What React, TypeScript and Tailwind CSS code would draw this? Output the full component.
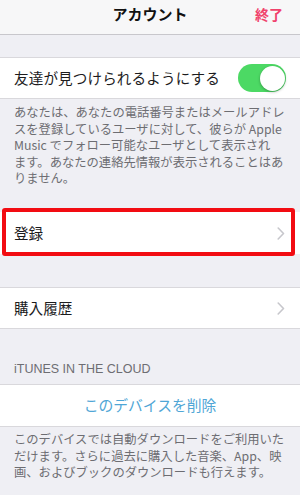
import React from "react";

const font = { fontFamily: '"Noto Sans CJK JP", "Noto Sans", sans-serif' };

function Chevron() {
  return (
    <svg width="8" height="13" viewBox="0 0 8 13" className="shrink-0">
      <path d="M1.2 1 L6.5 6.5 L1.2 12" fill="none" stroke="#c7c7cc" strokeWidth="1.6" strokeLinecap="round" strokeLinejoin="round" />
    </svg>
  );
}

export default function App() {
  return (
    <div className="w-[300px] h-[495px] overflow-hidden bg-[#efeff4] text-[#1c1c1e]" style={font}>
      {/* Nav bar */}
      <div className="h-[35px] bg-[#f7f7f8] border-b border-[#c8c7cc] flex items-start pt-[3px] relative">
        <div className="flex-1 text-center text-[15px] leading-[22px] font-bold text-[#111]">アカウント</div>
        <div className="absolute right-[17px] top-[3px] text-[14px] leading-[22px] font-bold text-[#f0426c]">終了</div>
      </div>

      <div className="h-[22px]" />

      {/* Toggle row */}
      <div className="h-[42px] bg-white border-y border-[#d9d8dc] flex items-center justify-between pl-[14px] pr-[14px]">
        <span className="text-[14.6px] tracking-[0.1px]">友達が見つけられるようにする</span>
        <div className="w-[48px] h-[28px] rounded-full bg-[#4cd964] flex items-center justify-end pr-[1.5px]">
          <div className="w-[25px] h-[25px] rounded-full bg-white shadow-[0_1px_3px_rgba(0,0,0,0.3)]" />
        </div>
      </div>

      {/* Footer 1 */}
      <div className="h-[113px] pt-[5px] pl-[14px] text-[12.3px] leading-[16.5px] text-[#6d6d72] whitespace-nowrap">
        <div>あなたは、あなたの電話番号またはメールアドレ</div>
        <div>スを登録しているユーザに対して、彼らが Apple</div>
        <div>Music でフォロー可能なユーザとして表示され</div>
        <div>ます。あなたの連絡先情報が表示されることはあ</div>
        <div>りません。</div>
      </div>

      {/* Registration row with red highlight */}
      <div className="relative h-[42px] bg-white flex items-center justify-between pl-[14px] pr-[15px]">
        <span className="text-[14.6px]">登録</span>
        <Chevron />
        <div className="absolute left-[2px] top-[-4px] w-[293px] h-[48px] border-[4px] border-[#f20c12] rounded-[3px]" />
      </div>

      <div className="h-[33px]" />

      {/* Purchase history row */}
      <div className="h-[42px] bg-white border-y border-[#d9d8dc] flex items-center justify-between pl-[14px] pr-[15px]">
        <span className="text-[14.6px]">購入履歴</span>
        <Chevron />
      </div>

      {/* Section header */}
      <div className="h-[55px] flex items-end pb-[7px] pl-[14px]">
        <span className="text-[12.5px] leading-[16px] text-[#6d6d72]" style={{ fontFamily: '"Liberation Sans", Arial, sans-serif' }}>
          iTUNES IN THE CLOUD
        </span>
      </div>

      {/* Remove device row */}
      <div className="h-[43px] bg-white border-y border-[#d9d8dc] flex items-center justify-center">
        <span className="text-[14.8px] text-[#4fa6d6]">このデバイスを削除</span>
      </div>

      {/* Footer 2 */}
      <div className="pt-[4px] pl-[14px] text-[12.3px] leading-[16.5px] text-[#6d6d72] whitespace-nowrap">
        <div>このデバイスでは自動ダウンロードをご利用いた</div>
        <div>だけます。さらに過去に購入した音楽、App、映</div>
        <div>画、およびブックのダウンロードも行えます。</div>
      </div>
    </div>
  );
}
